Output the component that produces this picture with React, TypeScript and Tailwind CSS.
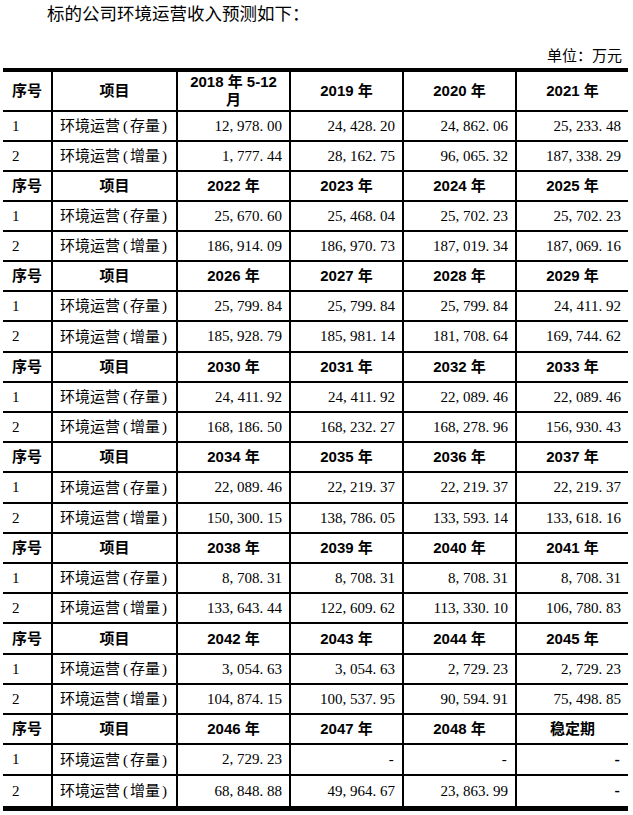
import React from "react";

type Group = { years: string[]; r1: string[]; r2: string[] };

const groups: Group[] = [
  { years: ["2018 年 5-12|月", "2019 年", "2020 年", "2021 年"], r1: ["12,978.00", "24,428.20", "24,862.06", "25,233.48"], r2: ["1,777.44", "28,162.75", "96,065.32", "187,338.29"] },
  { years: ["2022 年", "2023 年", "2024 年", "2025 年"], r1: ["25,670.60", "25,468.04", "25,702.23", "25,702.23"], r2: ["186,914.09", "186,970.73", "187,019.34", "187,069.16"] },
  { years: ["2026 年", "2027 年", "2028 年", "2029 年"], r1: ["25,799.84", "25,799.84", "25,799.84", "24,411.92"], r2: ["185,928.79", "185,981.14", "181,708.64", "169,744.62"] },
  { years: ["2030 年", "2031 年", "2032 年", "2033 年"], r1: ["24,411.92", "24,411.92", "22,089.46", "22,089.46"], r2: ["168,186.50", "168,232.27", "168,278.96", "156,930.43"] },
  { years: ["2034 年", "2035 年", "2036 年", "2037 年"], r1: ["22,089.46", "22,219.37", "22,219.37", "22,219.37"], r2: ["150,300.15", "138,786.05", "133,593.14", "133,618.16"] },
  { years: ["2038 年", "2039 年", "2040 年", "2041 年"], r1: ["8,708.31", "8,708.31", "8,708.31", "8,708.31"], r2: ["133,643.44", "122,609.62", "113,330.10", "106,780.83"] },
  { years: ["2042 年", "2043 年", "2044 年", "2045 年"], r1: ["3,054.63", "3,054.63", "2,729.23", "2,729.23"], r2: ["104,874.15", "100,537.95", "90,594.91", "75,498.85"] },
  { years: ["2046 年", "2047 年", "2048 年", "稳定期"], r1: ["2,729.23", "-", "-", "-b"], r2: ["68,848.88", "49,964.67", "23,863.99", "-b"] },
];

const serif = "font-['Liberation_Serif','Noto_Sans_CJK_SC',serif]";
const bold = "font-['Liberation_Sans','Noto_Sans_CJK_SC',sans-serif] font-bold";

function Num({ v }: { v: string }) {
  if (v === "-") {
    return <span className="inline-block w-[7.5px] text-center">-</span>;
  }
  if (v === "-b") {
    return <span className="inline-block w-[7.5px] text-center font-bold text-[16px]">-</span>;
  }
  return (
    <span>
      {v.split("").map((c, i) =>
        c === "," || c === "." ? (
          <span key={i} className="inline-block w-[7.5px]">
            {c}
          </span>
        ) : (
          <span key={i}>{c}</span>
        )
      )}
    </span>
  );
}

const tallRows = new Set([7, 12, 17, 21]);

function Row({
  idx,
  last,
  children,
}: {
  idx: number;
  last?: boolean;
  children: React.ReactNode;
}) {
  const h = tallRows.has(idx) ? "h-[31px]" : "h-[30px]";
  const b = last ? "" : "border-b-2 border-black";
  return (
    <div className={`grid grid-cols-[50px_125px_113px_113px_113px_111px] ${h} ${b}`}>
      {children}
    </div>
  );
}

function HeaderRow({ idx, years, first }: { idx: number; years: string[]; first?: boolean }) {
  const cells = ["序号", "项目", ...years];
  const rowCls = first
    ? "grid grid-cols-[50px_125px_113px_113px_113px_111px] h-[40px] border-b-2 border-black"
    : `grid grid-cols-[50px_125px_113px_113px_113px_111px] ${tallRows.has(idx) ? "h-[31px]" : "h-[30px]"} border-b-2 border-black`;
  return (
    <div className={rowCls}>
      {cells.map((c, i) => (
        <div
          key={i}
          className={`flex items-center justify-center text-center text-[15px] leading-[18px] ${bold} ${
            i < 5 ? "border-r-2 border-black" : ""
          }`}
        >
          {c.includes("|") ? (
            <span>
              {c.split("|")[0]}
              <br />
              {c.split("|")[1]}
            </span>
          ) : (
            c
          )}
        </div>
      ))}
    </div>
  );
}

function Label({ kind }: { kind: string }) {
  return (
    <span className="font-['Noto_Sans_CJK_SC',sans-serif] text-[15px]">
      环境运营
      <span className="inline-block pl-[3px] pr-[2px] font-['Liberation_Serif',serif]">(</span>
      {kind}
      <span className="inline-block pl-[2px] font-['Liberation_Serif',serif]">)</span>
    </span>
  );
}

function DataRow({ idx, n, kind, vals, last }: { idx: number; n: string; kind: string; vals: string[]; last?: boolean }) {
  return (
    <Row idx={idx} last={last}>
      <div className={`flex items-center pl-[9px] text-[15px] border-r-2 border-black ${serif}`}>{n}</div>
      <div className="flex items-center pl-[7px] border-r-2 border-black">
        <Label kind={kind} />
      </div>
      {vals.map((v, i) => (
        <div
          key={i}
          className={`flex items-center justify-end pr-[7px] text-[15px] ${serif} ${i < 3 ? "border-r-2 border-black" : ""}`}
        >
          <Num v={v} />
        </div>
      ))}
    </Row>
  );
}

export default function App() {
  const rows: React.ReactNode[] = [];
  groups.forEach((g, gi) => {
    if (gi === 0) {
      rows.push(<HeaderRow key="h0" idx={-1} years={g.years} first />);
      rows.push(<DataRow key="d0a" idx={0} n="1" kind="存量" vals={g.r1} />);
      rows.push(<DataRow key="d0b" idx={1} n="2" kind="增量" vals={g.r2} />);
    } else {
      const base = 3 * gi - 1;
      rows.push(<HeaderRow key={`h${gi}`} idx={base} years={g.years} />);
      rows.push(<DataRow key={`d${gi}a`} idx={base + 1} n="1" kind="存量" vals={g.r1} />);
      rows.push(
        <DataRow key={`d${gi}b`} idx={base + 2} n="2" kind="增量" vals={g.r2} last={gi === groups.length - 1} />
      );
    }
  });

  return (
    <div className="w-[633px] h-[815px] bg-white text-black overflow-hidden">
      <div className="pl-[47px] text-[17.5px] leading-[25px] font-['Noto_Sans_CJK_SC',sans-serif]">
        标的公司环境运营收入预测如下：
      </div>
      <div className="mt-[20px] flex justify-end pr-[11px] h-[20px] text-[15px] leading-[20px] font-['Noto_Sans_CJK_SC',sans-serif]">
        单位：万元
      </div>
      <div className="mt-[3px] ml-[3px] w-[625px] border-t-4 border-b-[5px] border-black">{rows}</div>
    </div>
  );
}
